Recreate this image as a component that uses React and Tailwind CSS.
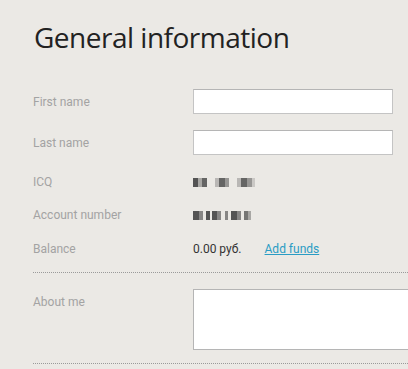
const Blur = ({ blocks }) => (
  <span className="flex h-[9px] items-stretch blur-[0.7px]">
    {blocks.map(([w, o], i) => (
      <span key={i} className="inline-block bg-[#444]" style={{ width: w, opacity: o }} />
    ))}
  </span>
)

function Row({ label, children, className = '' }) {
  return (
    <div className={`flex items-center ${className}`}>
      <div className="w-[160px] shrink-0 text-[12px] text-[#a3a3a3]">{label}</div>
      <div className="flex flex-1 items-center">{children}</div>
    </div>
  )
}

export default function App() {
  return (
    <div
      className="h-[369px] w-[408px] overflow-hidden bg-[#ebe9e5] pl-[33px]"
      style={{ fontFamily: 'Roboto, "Liberation Sans", sans-serif' }}
    >
      <h1
        className="pt-[20px] pl-[1px] text-[28px] leading-[34px] text-[#222]"
        style={{ fontFamily: '"Open Sans", "Noto Sans", sans-serif', letterSpacing: '-0.5px' }}
      >
        General information
      </h1>

      <div className="mt-[35px]">
        <Row label="First name">
          <input className="h-[25px] w-[200px] border border-[#c4c4c4] border-t-[#b5b5b5] bg-white" />
        </Row>
        <Row label="Last name" className="mt-[16px]">
          <input className="h-[25px] w-[200px] border border-[#c4c4c4] border-t-[#b5b5b5] bg-white" />
        </Row>
        <Row label="ICQ" className="mt-[20px] h-[14px]">
          <Blur
            blocks={[
              [5, 0.9], [4, 0.4], [5, 0.8], [8, 0], [4, 0.3], [6, 0.8], [4, 0.5], [8, 0],
              [4, 0.3], [6, 0.8], [5, 0.5], [3, 0.2],
            ]}
          />
        </Row>
        <Row label="Account number" className="mt-[19px] h-[14px]">
          <Blur
            blocks={[
              [6, 0.9], [4, 0.6], [3, 0], [4, 0.9], [2, 0], [5, 0.9], [4, 0.6], [4, 0],
              [3, 0.6], [3, 0], [6, 0.9], [4, 0.6], [3, 0], [4, 0.7], [3, 0.4],
            ]}
          />
        </Row>
        <Row label="Balance" className="mt-[20px] h-[14px]">
          <span className="text-[12px] text-[#333]">0.00 руб.</span>
          <a href="#" className="ml-[23px] text-[12px] text-[#2a9cc4] underline">
            Add funds
          </a>
        </Row>
      </div>

      <div className="mt-[16px] border-t border-dotted border-[#9a9a9a]" />

      <div className="mt-[16px] flex items-start">
        <div className="w-[160px] shrink-0 pt-[4px] text-[12px] text-[#a3a3a3]">About me</div>
        <textarea className="h-[61px] w-[260px] shrink-0 resize-none border border-[#b5b5b5] bg-white" />
      </div>

      <div className="mt-[13px] border-t border-dotted border-[#9a9a9a]" />
    </div>
  )
}
